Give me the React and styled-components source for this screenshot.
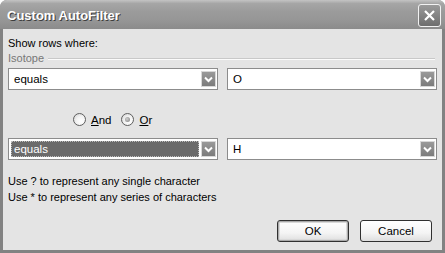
import React from "react";
import styled, { createGlobalStyle } from "styled-components";

const GlobalStyle = createGlobalStyle`
  html, body {
    margin: 0;
    padding: 0;
    background: #ffffff;
  }
  body {
    font-family: "Liberation Sans", Arial, sans-serif;
    font-size: 11px;
    color: #000;
  }
`;

const Window = styled.div`
  width: 445px;
  height: 253px;
  box-sizing: border-box;
  display: flex;
  flex-direction: column;
  background: #828282;
  border-radius: 7px 7px 0 0;
  overflow: hidden;
`;

const TitleBar = styled.div`
  height: 29px;
  flex: none;
  display: flex;
  align-items: center;
  justify-content: space-between;
  padding: 0 4px 0 7px;
  background: linear-gradient(#c4c4c4 0%, #a6a6a6 12%, #9b9b9b 40%, #969696 70%, #8b8b8b 100%);
  box-sizing: border-box;
`;

const Title = styled.span`
  font-family: "Liberation Sans", Arial, sans-serif;
  font-weight: bold;
  font-size: 13px;
  color: #fff;
  text-shadow: 1px 1px 0 #3d3d3d;
  margin-top: 1px;
`;

const CloseButton = styled.div`
  width: 21px;
  height: 21px;
  border: 1px solid #f2f2f2;
  border-radius: 3px;
  background: linear-gradient(#9a9a9a, #6e6e6e);
  display: flex;
  align-items: center;
  justify-content: center;
  margin-top: 1px;
`;

const Body = styled.div`
  flex: 1;
  margin: 0 3px 3px 3px;
  background: #e4e4e4;
  padding: 8px 5px 0 5px;
  display: flex;
  flex-direction: column;
`;

const Label = styled.div`
  line-height: 13px;
  height: 13px;
`;

const Group = styled.div`
  display: flex;
  align-items: center;
  gap: 4px;
  margin-top: 1px;
  height: 13px;
  color: #777;
`;

const GroupLine = styled.div`
  flex: 1;
  height: 0;
  border-top: 1px solid #c8c8c8;
  border-bottom: 1px solid #fbfbfb;
  margin-right: 2px;
  margin-top: 2px;
`;

const Row = styled.div`
  display: flex;
  gap: 9px;
  margin-top: ${(p) => p.$top}px;
`;

const Combo = styled.div`
  width: 210px;
  height: 22px;
  box-sizing: border-box;
  border: 1px solid #8c8c8c;
  background: #fff;
  display: flex;
  align-items: center;
  padding: 2px 1px 2px 2px;
`;

const ComboText = styled.div`
  flex: 1;
  height: 16px;
  line-height: 14px;
  box-sizing: border-box;
  padding-left: 2px;
  margin-right: 2px;
  border: 1px ${(p) => (p.$selected ? "dotted #bdbdbd" : "solid transparent")};
  background: ${(p) => (p.$selected ? "#6b6b6b" : "transparent")};
  color: ${(p) => (p.$selected ? "#fff" : "#000")};
  font-size: 11.5px;
`;

const DropButton = styled.div`
  width: 15px;
  height: 16px;
  flex: none;
  border: 1px solid #d8d8d8;
  box-sizing: border-box;
  background: linear-gradient(#9a9a9a, #7c7c7c);
  display: flex;
  align-items: center;
  justify-content: center;
`;

const RadioRow = styled.div`
  display: flex;
  align-items: center;
  gap: 10px;
  margin-top: 22px;
  padding-left: 65px;
  height: 15px;
`;

const RadioOption = styled.label`
  display: flex;
  align-items: center;
  gap: 5px;
  font-size: 11.5px;
`;

const RadioCircle = styled.span`
  width: 11px;
  height: 11px;
  border-radius: 50%;
  border: 1px solid #5e5e5e;
  background: radial-gradient(circle at 65% 65%, #ffffff 0%, #f3f3f3 45%, #cfcfcf 100%);
  display: flex;
  align-items: center;
  justify-content: center;
`;

const RadioDot = styled.span`
  width: 5px;
  height: 5px;
  border-radius: 50%;
  background: radial-gradient(circle at 40% 40%, #cfcfcf, #7d7d7d);
`;

const Hints = styled.div`
  margin-top: 13px;
  line-height: 16px;
  font-size: 11px;
`;

const Buttons = styled.div`
  display: flex;
  justify-content: flex-end;
  gap: 11px;
  margin-top: 15px;
  padding-right: 5px;
`;

const Button = styled.div`
  width: 72px;
  height: 22px;
  box-sizing: border-box;
  border: 1px solid #303030;
  border-radius: 3px;
  background: linear-gradient(#ffffff 0%, #f4f4f4 60%, #dedede 100%);
  box-shadow: ${(p) => (p.$default ? "inset 0 0 0 1px #a9a9a9, inset 0 0 0 2px #d9d9d9" : "none")};
  display: flex;
  align-items: center;
  justify-content: center;
  font-size: 11.5px;
`;

function Chevron() {
  return (
    <svg width="9" height="7" viewBox="0 0 9 7">
      <path d="M1 1.5 L4.5 5 L8 1.5" stroke="#fff" strokeWidth="2" fill="none" />
    </svg>
  );
}

function Select({ value, selected }) {
  return (
    <Combo>
      <ComboText $selected={selected}>{value}</ComboText>
      <DropButton>
        <Chevron />
      </DropButton>
    </Combo>
  );
}

export default function App() {
  return (
    <>
      <GlobalStyle />
      <Window>
        <TitleBar>
          <Title>Custom AutoFilter</Title>
          <CloseButton>
            <svg width="13" height="13" viewBox="0 0 13 13">
              <path d="M2 2 L11 11 M11 2 L2 11" stroke="#fff" strokeWidth="2.2" />
            </svg>
          </CloseButton>
        </TitleBar>
        <Body>
          <Label>Show rows where:</Label>
          <Group>
            Isotope
            <GroupLine />
          </Group>
          <Row $top={4}>
            <Select value="equals" />
            <Select value="O" />
          </Row>
          <RadioRow>
            <RadioOption>
              <RadioCircle />
              <span>
                <u>A</u>nd
              </span>
            </RadioOption>
            <RadioOption>
              <RadioCircle>
                <RadioDot />
              </RadioCircle>
              <span>
                <u>O</u>r
              </span>
            </RadioOption>
          </RadioRow>
          <Row $top={11}>
            <Select value="equals" selected />
            <Select value="H" />
          </Row>
          <Hints>
            <div>Use ? to represent any single character</div>
            <div>Use * to represent any series of characters</div>
          </Hints>
          <Buttons>
            <Button $default>OK</Button>
            <Button>Cancel</Button>
          </Buttons>
        </Body>
      </Window>
    </>
  );
}
